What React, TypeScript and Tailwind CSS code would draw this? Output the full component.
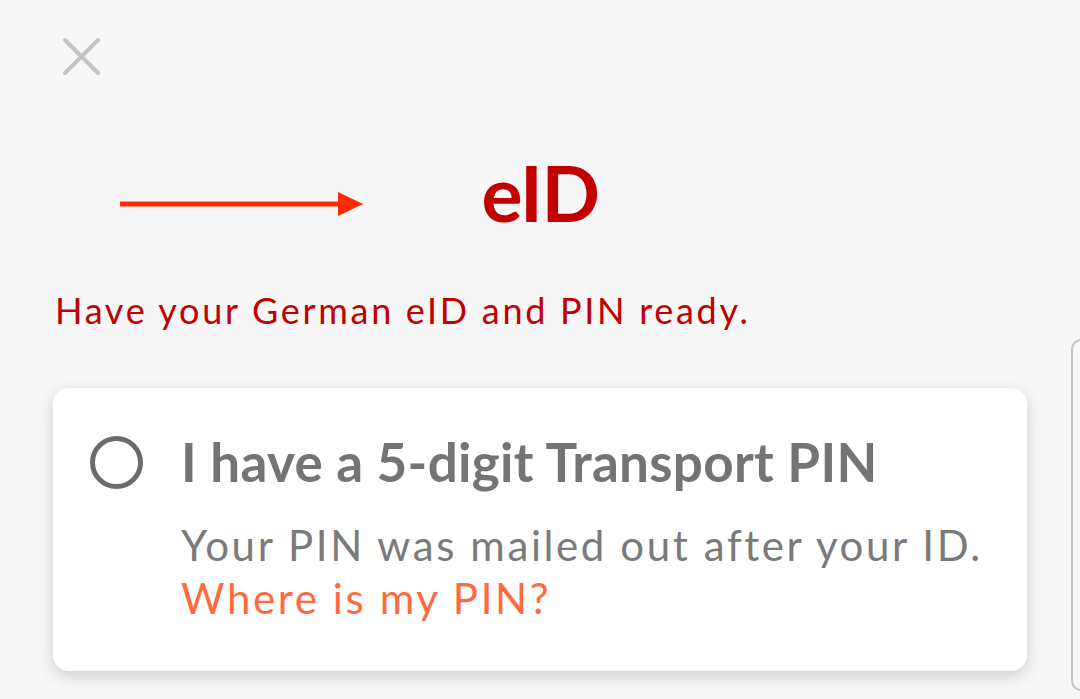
const App = () => {
  return (
    <div className="h-[699px] w-[1080px] overflow-hidden bg-[#f7f7f7] font-['Lato',sans-serif]">
      <div className="pl-[62px] pt-[37px]">
        <svg width="39" height="39" viewBox="0 0 39 39" className="block">
          <path d="M3 3 L36 36 M36 3 L3 36" stroke="#c4c4c4" strokeWidth="4" strokeLinecap="round" />
        </svg>
      </div>

      <div className="mt-[78px] grid grid-cols-[1fr_auto_1fr] items-start">
        <div className="pl-[120px] pt-[37px]">
          <svg width="243" height="26" viewBox="0 0 243 26" className="block">
            <rect x="0" y="10.5" width="222" height="5" fill="#ff2a00" />
            <polygon points="218,1 243,13 218,25" fill="#ff2a00" />
          </svg>
        </div>
        <h1 className="text-[77px] font-bold leading-none tracking-[-1.5px] text-[#c20000]">eID</h1>
        <div />
      </div>

      <p className="mt-[61px] pl-[55px] text-[36px] leading-none tracking-[2.7px] text-[#c20000]">
        Have your German eID and PIN ready.
      </p>

      <div className="mt-[60px] flex items-start gap-[44px] pl-[53px]">
        <div className="h-[283px] w-[974px] shrink-0 rounded-[16px] bg-white shadow-[0_5px_16px_rgba(0,0,0,0.17)]">
          <div className="flex items-start gap-[38px] pl-[37px] pt-[48px]">
            <div className="h-[53px] w-[53px] shrink-0 rounded-full border-[5px] border-[#6b6b6b]" />
            <div className="-mt-px">
              <h2 className="text-[53px] font-bold leading-none tracking-[0.3px] text-[#747474]">
                I have a 5-digit Transport PIN
              </h2>
              <p className="mt-[31px] text-[42px] leading-[53px] tracking-[2.6px] text-[#7a7a7a]">
                Your PIN was mailed out after your ID.
                <br />
                <span className="text-[#ff6a3d]">Where is my PIN?</span>
              </p>
            </div>
          </div>
        </div>
        <div className="-mt-[49px] h-[352px] w-[60px] shrink-0 rounded-[10px] border-2 border-[#c4c4c4]" />
      </div>
    </div>
  );
};

export default App;
